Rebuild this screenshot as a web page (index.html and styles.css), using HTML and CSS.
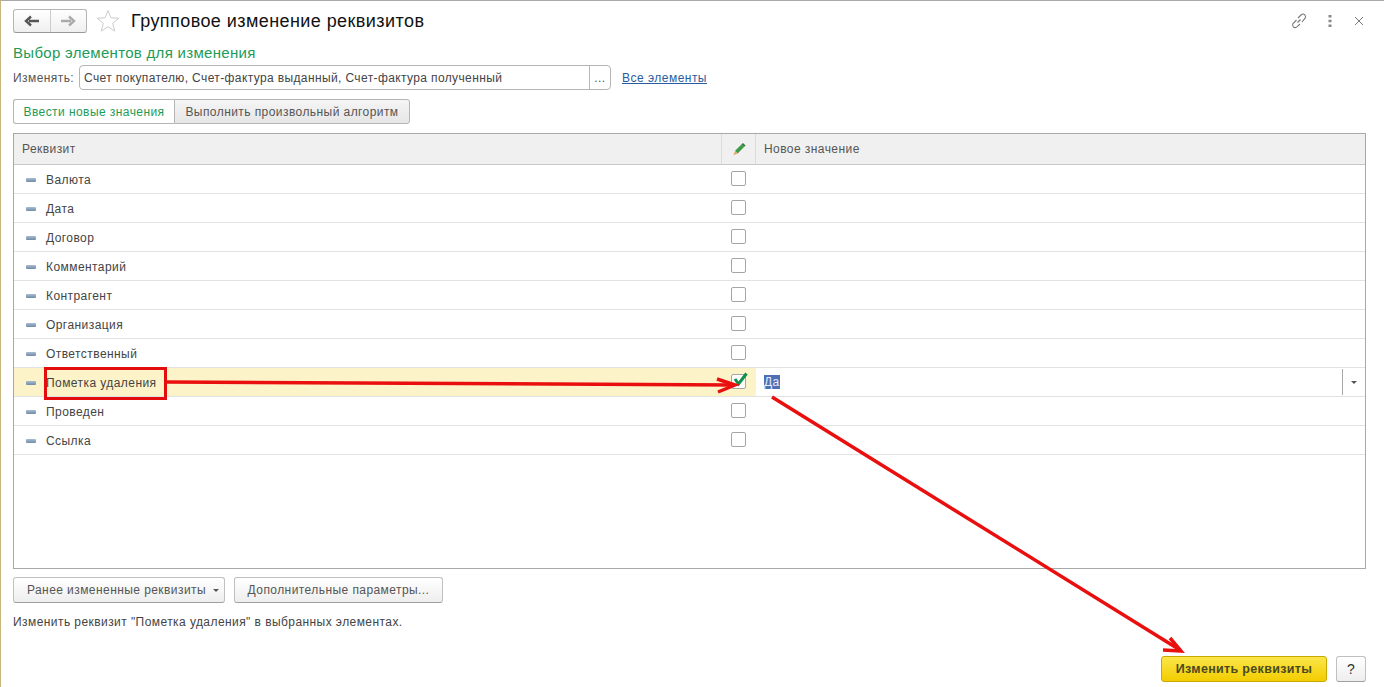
FILE: index.html
```html
<!DOCTYPE html>
<html lang="ru">
<head>
<meta charset="utf-8">
<title>Групповое изменение реквизитов</title>
<link rel="stylesheet" href="styles.css">
</head>
<body>
<div class="page">
  <header class="head">
    <div class="nav">
      <button class="nav-btn"><svg width="16" height="12" viewBox="0 0 16 12"><path d="M15 6H5M7 1.500 2 6l5 4.500" fill="none" stroke="#555" stroke-width="2.400"/></svg></button>
      <button class="nav-btn"><svg width="16" height="12" viewBox="0 0 16 12"><path d="M1 6h10M9 1.500 14 6l-5 4.500" fill="none" stroke="#aaa" stroke-width="2.400"/></svg></button>
    </div>
    <svg class="star" width="24" height="24" viewBox="0 0 24 24"><path d="M12 1.500l2.900 7.300 7.900.5-6.100 5 2 7.700L12 17.700l-6.700 4.300 2-7.700-6.100-5 7.900-.5z" fill="#fff" stroke="#ccc"/></svg>
    <h1 class="title">Групповое изменение реквизитов</h1>
    <div class="tools">
      <svg width="18" height="18" viewBox="0 0 18 18"><path d="M7.500 10.500l3-3M6.500 8 3 11.500a2.600 2.600 0 0 0 3.600 3.600L10 12M8 6l3.500-3.500a2.600 2.600 0 0 1 3.600 3.600L12 10" fill="none" stroke="#777" stroke-width="1.100"/></svg>
      <svg class="dots" width="4" height="14" viewBox="0 0 4 14"><path d="M.5 1h3v2.500h-3zM.5 5.700h3v2.500h-3zM.5 10.500h3V13h-3z" fill="#888"/></svg>
      <svg class="close" width="10" height="10" viewBox="0 0 10 10"><path d="M1 1l8 8M9 1l-8 8" stroke="#777" stroke-width="1"/></svg>
    </div>
  </header>

  <h2 class="section">Выбор элементов для изменения</h2>

  <div class="field-row">
    <label class="label">Изменять:</label>
    <div class="input">
      <span class="input-text">Счет покупателю, Счет-фактура выданный, Счет-фактура полученный</span>
      <span class="input-btn">...</span>
    </div>
    <a class="link" href="#">Все элементы</a>
  </div>

  <div class="tabs">
    <div class="tab tab-active">Ввести новые значения</div>
    <div class="tab">Выполнить произвольный алгоритм</div>
  </div>

  <section class="table">
    <div class="thead">
      <div class="c1 th">Реквизит</div>
      <div class="c2 th th-icon"><svg width="14" height="14" viewBox="0 0 16 16"><path d="M3.500 10 11 2.500l3 3L6.500 13z" fill="#3f9a45"/><path d="M3.500 10 1.500 15l5-2z" fill="#e0a868"/><path d="M11 2.500l1.500-1.500 3 3-1.500 1.500z" fill="#2f7a35"/></svg></div>
      <div class="c3 th">Новое значение</div>
    </div>
    <div class="row"><div class="c1"><i class="dash"></i>Валюта</div><div class="c2"><i class="check"></i></div><div class="c3"></div></div>
    <div class="row"><div class="c1"><i class="dash"></i>Дата</div><div class="c2"><i class="check"></i></div><div class="c3"></div></div>
    <div class="row"><div class="c1"><i class="dash"></i>Договор</div><div class="c2"><i class="check"></i></div><div class="c3"></div></div>
    <div class="row"><div class="c1"><i class="dash"></i>Комментарий</div><div class="c2"><i class="check"></i></div><div class="c3"></div></div>
    <div class="row"><div class="c1"><i class="dash"></i>Контрагент</div><div class="c2"><i class="check"></i></div><div class="c3"></div></div>
    <div class="row"><div class="c1"><i class="dash"></i>Организация</div><div class="c2"><i class="check"></i></div><div class="c3"></div></div>
    <div class="row"><div class="c1"><i class="dash"></i>Ответственный</div><div class="c2"><i class="check"></i></div><div class="c3"></div></div>
    <div class="row row-active">
      <div class="c1"><i class="dash"></i>Пометка удаления</div>
      <div class="c2"><i class="check"><svg class="tick" width="17" height="16" viewBox="0 0 17 16"><path d="M3 8l3.500 5L14.500 2.500" fill="none" stroke="#0f8f4a" stroke-width="3"/></svg></i></div>
      <div class="c3 edit"><span class="sel">Да</span><span class="drop"><i class="caret"></i></span></div>
    </div>
    <div class="row"><div class="c1"><i class="dash"></i>Проведен</div><div class="c2"><i class="check"></i></div><div class="c3"></div></div>
    <div class="row"><div class="c1"><i class="dash"></i>Ссылка</div><div class="c2"><i class="check"></i></div><div class="c3"></div></div>
  </section>

  <div class="actions">
    <button class="btn btn-first">Ранее измененные реквизиты<i class="caret caret-btn"></i></button>
    <button class="btn btn-second">Дополнительные параметры...</button>
  </div>
  <p class="hint">Изменить реквизит "Пометка удаления" в выбранных элементах.</p>

  <footer class="foot">
    <button class="btn-main">Изменить реквизиты</button>
    <button class="btn-help">?</button>
  </footer>

  <div class="redbox"></div>
  <svg class="arrows" width="1384" height="687" viewBox="0 0 1384 687">
    <g fill="none" stroke="#ea0f0f" stroke-width="3.500">
      <path d="M166 382 L733 385"/>
      <path d="M717 379 L735 385 L718 392"/>
      <path d="M772 397 L1180 650"/>
      <path d="M1170 638 L1181 651 L1163 650"/>
    </g>
  </svg>
</div>
</body>
</html>
```
FILE: styles.css
```css
* { box-sizing: border-box; }
html, body { margin: 0; padding: 0; background: #fff; }
body { font-family: "Liberation Sans", Arial, sans-serif; font-size: 12px; letter-spacing: .43px; color: #4a4a4a; }
button { font-family: inherit; letter-spacing: inherit; margin: 0; }

.page {
  position: relative;
  width: 1384px;
  height: 687px;
  overflow: hidden;
  border-top: 1px solid #a9a9a9;
  border-left: 1px solid #c8b67e;
  padding: 8px 18px 0 12px;
}

.head { display: flex; align-items: center; height: 24px; }
.nav {
  display: flex;
  width: 74px;
  height: 24px;
  border: 1px solid #b5b5b5;
  border-bottom-color: #999;
  border-radius: 3px;
  background: linear-gradient(#fff, #efefef);
}
.nav-btn {
  flex: 1;
  border: 0;
  padding: 0;
  background: none;
  display: flex;
  align-items: center;
  justify-content: center;
}
.nav-btn + .nav-btn { border-left: 1px solid #ccc; }
.star { margin-left: 9px; }
.title { margin: 0 0 0 11px; font-size: 18px; font-weight: 400; color: #111; line-height: 24px; }
.tools { display: flex; align-items: center; margin: 0 2px 0 auto; }
.dots { margin-left: 20px; }
.close { margin-left: 22px; }

.section { margin: 10px 0 0; font-size: 15px; letter-spacing: .3px; font-weight: 400; line-height: 20px; color: #1e9b57; }

.field-row { display: flex; align-items: center; height: 25px; margin-top: 2px; }
.label { width: 66px; color: #555; }
.input {
  display: flex;
  width: 532px;
  height: 25px;
  border: 1px solid #b5b5b5;
  border-radius: 4px;
  align-items: center;
}
.input-text { flex: 1; padding-left: 4px; color: #444; letter-spacing: .38px; }
.input-btn {
  width: 21px;
  height: 23px;
  border-left: 1px solid #b8b8b8;
  text-align: center;
  line-height: 24px;
  color: #555;
}
.link { margin-left: 11px; color: #2a5d9e; text-decoration: underline; letter-spacing: .48px; }

.tabs { display: flex; margin-top: 9px; height: 25px; }
.tab {
  display: flex;
  align-items: center;
  justify-content: center;
  width: 236px;
  border: 1px solid #b5b5b5;
  border-left: 0;
  border-radius: 0 3px 3px 0;
  background: linear-gradient(#f5f5f5, #e6e6e6);
  color: #555;
}
.tab-active {
  width: 161px;
  border-left: 1px solid #b5b5b5;
  border-right: 0;
  border-radius: 3px 0 0 3px;
  background: #fff;
  color: #1e9b57;
}
.tab-active + .tab { border-left: 1px solid #b5b5b5; }

.table {
  margin-top: 9px;
  width: 1353px;
  height: 436px;
  border: 1px solid #a8a8a8;
}
.thead { display: flex; height: 31px; background: #f0f0f0; border-bottom: 1px solid #c8c8c8; }
.c1 { width: 707px; display: flex; align-items: center; }
.c2 { width: 35px; display: flex; align-items: center; justify-content: center; }
.c3 { flex: 1; display: flex; align-items: center; }
.th { color: #555; }
.thead .c1 { padding-left: 8px; }
.thead .c2 { border-left: 1px solid #dcdcdc; border-right: 1px solid #dcdcdc; }
.thead .c3 { padding-left: 8px; }

.row { display: flex; height: 29px; border-bottom: 1px solid #e2e2e2; color: #444; }
.row .c1 { padding: 1px 0 0 12px; }
.dash {
  display: block;
  width: 10px;
  height: 4px;
  margin-right: 10px;
  border-radius: 1px;
  background: linear-gradient(#a9bdd0, #6f8ba6);
}
.check {
  position: relative;
  display: block;
  width: 15px;
  height: 15px;
  margin-top: -2px;
  border: 1px solid #a5a5a5;
  border-radius: 2px;
  background: #fff;
}
.tick { position: absolute; left: 0; top: -4px; }
.row-active .c1, .row-active .c2 { background: #fdf3c8; }
.edit { position: relative; padding-left: 8px; }
.sel { background: #4f6fb5; color: #e8ecf8; }
.drop {
  position: absolute;
  right: 0;
  top: 1px;
  width: 23px;
  height: 26px;
  border-left: 1px solid #a8a8a8;
  display: flex;
  align-items: center;
  justify-content: center;
}
.caret {
  display: block;
  width: 0;
  height: 0;
  border-left: 3px solid transparent;
  border-right: 3px solid transparent;
  border-top: 3px solid #555;
}

.actions { display: flex; gap: 9px; margin-top: 8px; }
.btn {
  display: flex;
  align-items: center;
  justify-content: center;
  height: 26px;
  padding: 0;
  border: 1px solid #c0c0c0;
  border-bottom-color: #a0a0a0;
  border-radius: 3px;
  background: linear-gradient(#fff, #eee);
  color: #555;
  font-size: 12px;
}
.btn-first { width: 212px; padding-left: 8px; }
.btn-second { width: 209px; }
.caret-btn { margin-left: 7px; }

.hint { margin: 12px 0 0; line-height: 14px; color: #444; }

.foot { position: absolute; right: 18px; bottom: 5px; display: flex; gap: 9px; }
.btn-main {
  width: 166px;
  height: 26px;
  padding: 0;
  border: 1px solid #c9a900;
  border-radius: 3px;
  background: linear-gradient(#fbe64a, #f3cd00);
  font-size: 12.500px;
  letter-spacing: .33px;
  font-weight: 700;
  color: #4a4a20;
}
.btn-help {
  width: 30px;
  height: 26px;
  padding: 0;
  border: 1px solid #c0c0c0;
  border-bottom-color: #a0a0a0;
  border-radius: 3px;
  background: linear-gradient(#fff, #eee);
  font-size: 14px;
  color: #333;
}

.redbox {
  position: absolute;
  left: 43px;
  top: 366px;
  width: 123px;
  height: 33px;
  border: 3px solid #e30d0d;
}
.arrows { position: absolute; left: -1px; top: -1px; pointer-events: none; }
```
